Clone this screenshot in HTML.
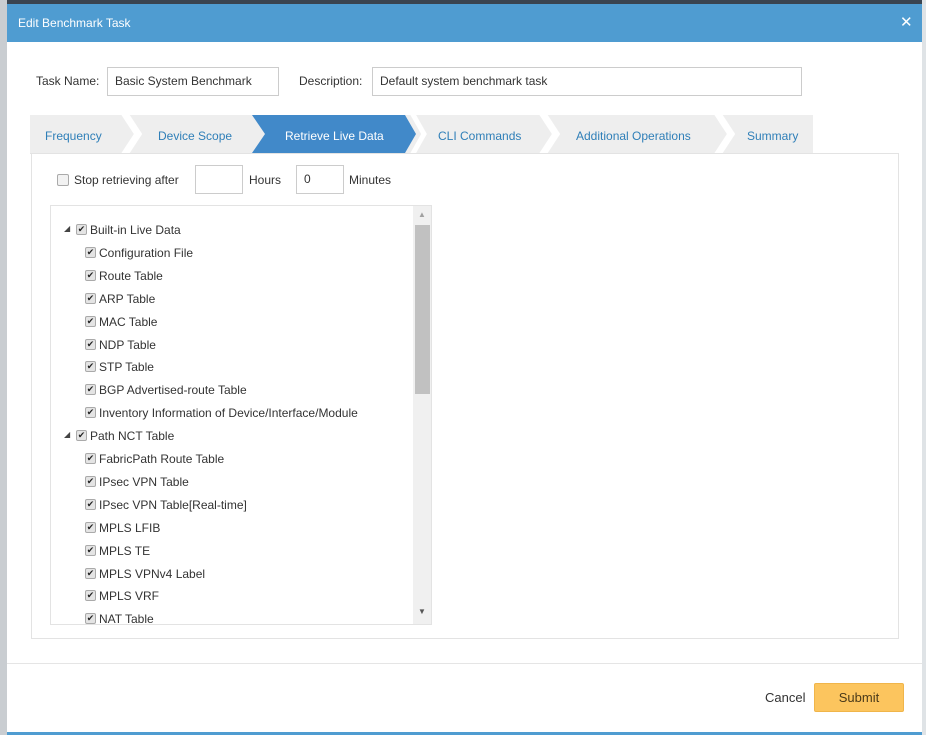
<!DOCTYPE html>
<html><head><style>
*{box-sizing:border-box;margin:0;padding:0}
body{width:926px;height:735px;position:relative;overflow:hidden;background:#fff;font-family:"Liberation Sans",sans-serif;font-size:12px;color:#333}
.abs{position:absolute}
.inp{position:absolute;border:1px solid #ccc;background:#fff;height:29px;line-height:27px;padding-left:7px;font-size:12px;color:#333}
.cb{position:absolute;width:11px;height:11px;border:1px solid #aaa;border-radius:2px;background:#e4e4e4;font-size:9px;line-height:9px;text-align:center;color:#222}
.row{position:absolute;font-size:12px;color:#333;line-height:14px}
.tab{position:absolute;top:129px;font-size:12px;color:#2f7fb8}
</style></head><body>
<div class="abs" style="left:0;top:0;width:926px;height:5px;background:#3a4450"></div>
<div class="abs" style="left:0;top:0;width:7px;height:735px;background:#c9cdd1"></div>
<div class="abs" style="left:922px;top:0;width:4px;height:735px;background:#dfe3e6"></div>
<div class="abs" style="left:7px;top:732px;width:915px;height:3px;background:#4f9cd1"></div>
<div class="abs" style="left:7px;top:4px;width:915px;height:38px;background:#4f9cd1"></div>
<div class="abs" style="left:18px;top:16px;color:#fff;font-size:12px">Edit Benchmark Task</div>
<div class="abs" style="left:900px;top:14px;color:#fff;font-size:15px;line-height:18px">✕</div>

<div class="abs" style="left:36px;top:74px">Task Name:</div>
<div class="inp" style="left:107px;top:67px;width:172px">Basic System Benchmark</div>
<div class="abs" style="left:299px;top:74px">Description:</div>
<div class="inp" style="left:372px;top:67px;width:430px">Default system benchmark task</div>

<svg class="abs" style="left:0;top:0" width="926" height="160">
<rect x="30" y="115" width="783" height="38" fill="#eeeeee"/>
<g fill="none" stroke="#fff" stroke-width="7">
<polyline points="123,111 138,134 123,157"/>
<polyline points="541,111 556,134 541,157"/>
<polyline points="716,111 731,134 716,157"/>
</g>
<polyline points="411,111 424,134 411,157" fill="none" stroke="#fff" stroke-width="5"/>
<polygon points="252,115 405,115 416,134 405,153 252,153 265,134" fill="#4189c9"/>
</svg>
<div class="tab" style="left:45px">Frequency</div>
<div class="tab" style="left:158px">Device Scope</div>
<div class="tab" style="left:285px;color:#fff">Retrieve Live Data</div>
<div class="tab" style="left:438px">CLI Commands</div>
<div class="tab" style="left:576px">Additional Operations</div>
<div class="tab" style="left:747px">Summary</div>

<div class="abs" style="left:31px;top:153px;width:868px;height:486px;border:1px solid #e3e3e3;border-top:none"></div>
<div class="abs" style="left:30px;top:153px;width:869px;height:1px;background:#e3e3e3"></div>

<div class="cb" style="left:57px;top:174px;width:12px;height:12px;background:#f2f2f2;border-color:#aaa"></div>
<div class="abs" style="left:74px;top:173px">Stop retrieving after</div>
<div class="inp" style="left:195px;top:165px;width:48px;height:29px;background:#fff"></div>
<div class="abs" style="left:249px;top:173px">Hours</div>
<div class="inp" style="left:296px;top:165px;width:48px">0</div>
<div class="abs" style="left:349px;top:173px">Minutes</div>

<div class="abs" style="left:50px;top:205px;width:382px;height:420px;border:1px solid #e3e3e3;overflow:hidden">
<div class="abs" style="left:362px;top:0;width:19px;height:420px;background:#f0f0f0"></div>
<div class="abs" style="left:364px;top:19px;width:15px;height:169px;background:#c1c1c1"></div>
<div class="abs" style="left:367px;top:4px;font-size:8px;color:#a0a0a0">▲</div>
<div class="abs" style="left:367px;top:401px;font-size:8px;color:#555">▼</div>
</div>
<div id="tree"></div>
<script>
var items=[["Built-in Live Data",1],["Configuration File"],["Route Table"],["ARP Table"],["MAC Table"],["NDP Table"],["STP Table"],["BGP Advertised-route Table"],["Inventory Information of Device/Interface/Module"],["Path NCT Table",1],["FabricPath Route Table"],["IPsec VPN Table"],["IPsec VPN Table[Real-time]"],["MPLS LFIB"],["MPLS TE"],["MPLS VPNv4 Label"],["MPLS VRF"],["NAT Table"]];
var h="";items.forEach(function(it,i){var y=Math.round(230+i*22.9);var x=it[1]?76:85;
if(it[1])h+='<div class="abs" style="left:64px;top:'+(y-6)+'px;font-size:8px;color:#444">◢</div>';
h+='<div class="cb" style="left:'+x+'px;top:'+(y-6)+'px">✔</div><div class="row" style="left:'+(x+14)+'px;top:'+(y-7)+'px">'+it[0]+'</div>';});
document.getElementById("tree").innerHTML=h;
</script>

<div class="abs" style="left:7px;top:663px;width:915px;height:1px;background:#e5e5e5"></div>
<div class="abs" style="left:765px;top:690px;font-size:13px;color:#333">Cancel</div>
<div class="abs" style="left:814px;top:683px;width:90px;height:29px;background:#fcc55e;border:1px solid #f0b54a;border-radius:2px;text-align:center;line-height:27px;font-size:13px;color:#4a3a1a">Submit</div>
</body></html>
